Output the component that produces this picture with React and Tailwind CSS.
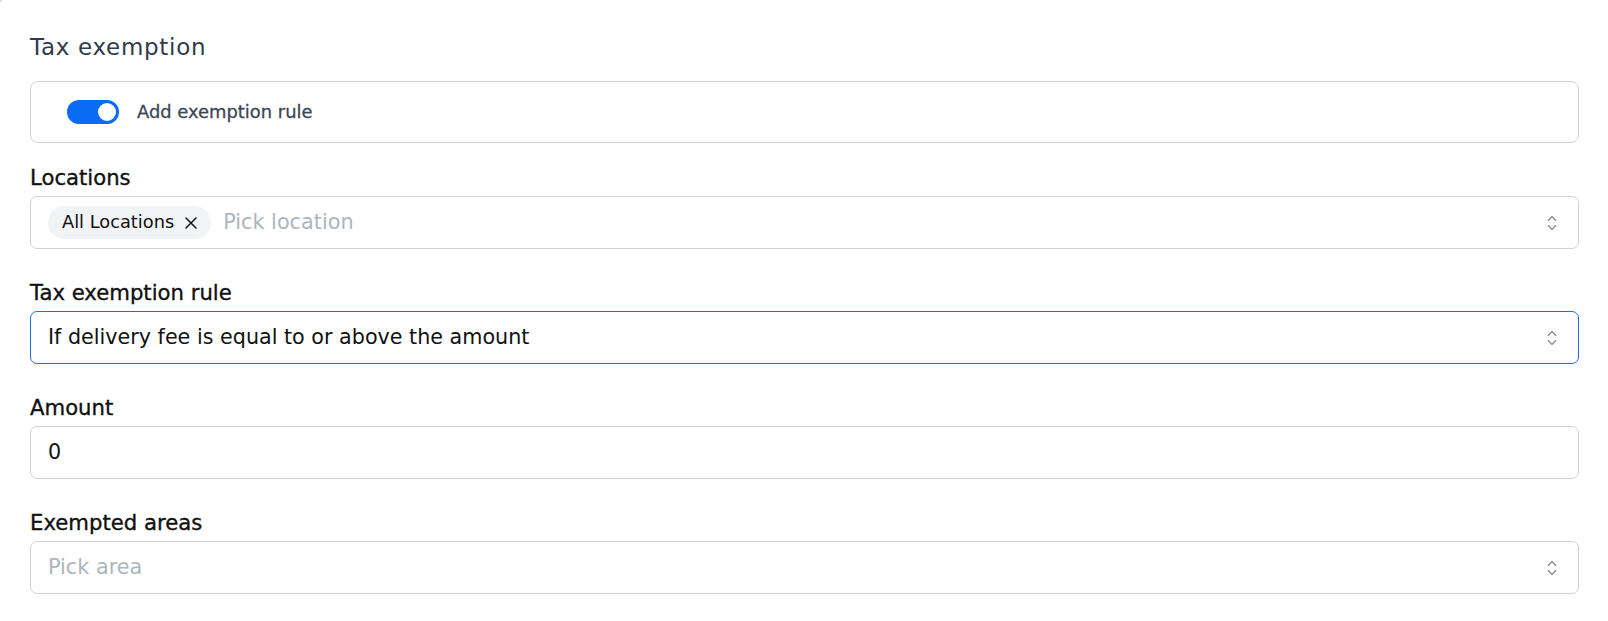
import React from "react";

const font = { fontFamily: "'DejaVu Sans', Verdana, sans-serif" };

function Chevrons() {
  return (
    <svg width="24" height="24" viewBox="0 0 15 15" fill="none" className="shrink-0 text-[#868e96]">
      <path
        d="M4.93179 5.43179C4.75605 5.60753 4.75605 5.89245 4.93179 6.06819C5.10753 6.24392 5.39245 6.24392 5.56819 6.06819L7.49999 4.13638L9.43179 6.06819C9.60753 6.24392 9.89245 6.24392 10.0682 6.06819C10.2439 5.89245 10.2439 5.60753 10.0682 5.43179L7.81819 3.18179C7.73379 3.0974 7.61933 3.04999 7.49999 3.04999C7.38064 3.04999 7.26618 3.0974 7.18179 3.18179L4.93179 5.43179ZM10.0682 9.56819C10.2439 9.39245 10.2439 9.10753 10.0682 8.93179C9.89245 8.75606 9.60753 8.75606 9.43179 8.93179L7.49999 10.8636L5.56819 8.93179C5.39245 8.75606 5.10753 8.75606 4.93179 8.93179C4.75605 9.10753 4.75605 9.39245 4.93179 9.56819L7.18179 11.8182C7.26618 11.9026 7.38064 11.95 7.49999 11.95C7.61933 11.95 7.73379 11.9026 7.81819 11.8182L10.0682 9.56819Z"
        fill="currentColor"
      />
    </svg>
  );
}

function CloseIcon() {
  return (
    <svg width="12" height="12" viewBox="0 0 12 12" fill="none" className="shrink-0">
      <path d="M1 1L11 11M11 1L1 11" stroke="#111" strokeWidth="1.5" strokeLinecap="round" />
    </svg>
  );
}

function Field({ label, children }) {
  return (
    <div className="flex flex-col">
      <label className="h-[24px] leading-[24px] text-[21.2px] text-[#111] mb-[6px] [-webkit-text-stroke:0.35px]">
        {label}
      </label>
      {children}
    </div>
  );
}

function Box({ focused, children, select }) {
  return (
    <div
      className={
        "h-[53px] rounded-[7px] border bg-white flex items-center pl-[17px] pr-[14px] " +
        (focused ? "border-[#1a6ef0]" : "border-[#ced4da]")
      }
    >
      <div className="flex-1 flex items-center min-w-0">{children}</div>
      {select && <Chevrons />}
    </div>
  );
}

export default function App() {
  return (
    <div className="w-[1608px] h-[621px] bg-white relative" style={font}>
      <div className="absolute left-0 top-0 w-[2px] h-[2px] bg-[#d5d8dc] rounded-br-full" />
      <div className="pt-[33px] pl-[30px] pr-[29px] flex flex-col">
        <h2 className="h-[28px] leading-[28px] text-[23px] tracking-[0.7px] font-normal text-[#2f3b4a] mb-[20px]">
          Tax exemption
        </h2>

        <div className="h-[62px] rounded-[8px] border border-[#ced4da] flex items-center pl-[36px] gap-[18px] mb-[23px]">
          <div className="w-[52px] h-[24px] rounded-full bg-[#0a6cf5] flex items-center justify-end pr-[3px]">
            <div className="w-[18px] h-[18px] rounded-full bg-white" />
          </div>
          <span className="text-[17.9px] text-[#3d4654] [-webkit-text-stroke:0.3px]">Add exemption rule</span>
        </div>

        <div className="flex flex-col gap-[32px]">
          <Field label="Locations">
            <Box select>
              <div className="flex items-center gap-[12px]">
                <div className="h-[33px] rounded-full bg-[#f1f3f5] flex items-center pl-[14px] pr-[14px] gap-[11px]">
                  <span className="text-[17.8px] text-[#111]">All Locations</span>
                  <CloseIcon />
                </div>
                <span className="text-[20.8px] text-[#adb5bd]">Pick location</span>
              </div>
            </Box>
          </Field>

          <Field label="Tax exemption rule">
            <Box select focused>
              <span className="text-[20.7px] text-[#111]">If delivery fee is equal to or above the amount</span>
            </Box>
          </Field>

          <Field label="Amount">
            <Box>
              <span className="text-[20.7px] text-[#111]">0</span>
            </Box>
          </Field>

          <Field label="Exempted areas">
            <Box select>
              <span className="text-[20.8px] text-[#adb5bd]">Pick area</span>
            </Box>
          </Field>
        </div>
      </div>
    </div>
  );
}
